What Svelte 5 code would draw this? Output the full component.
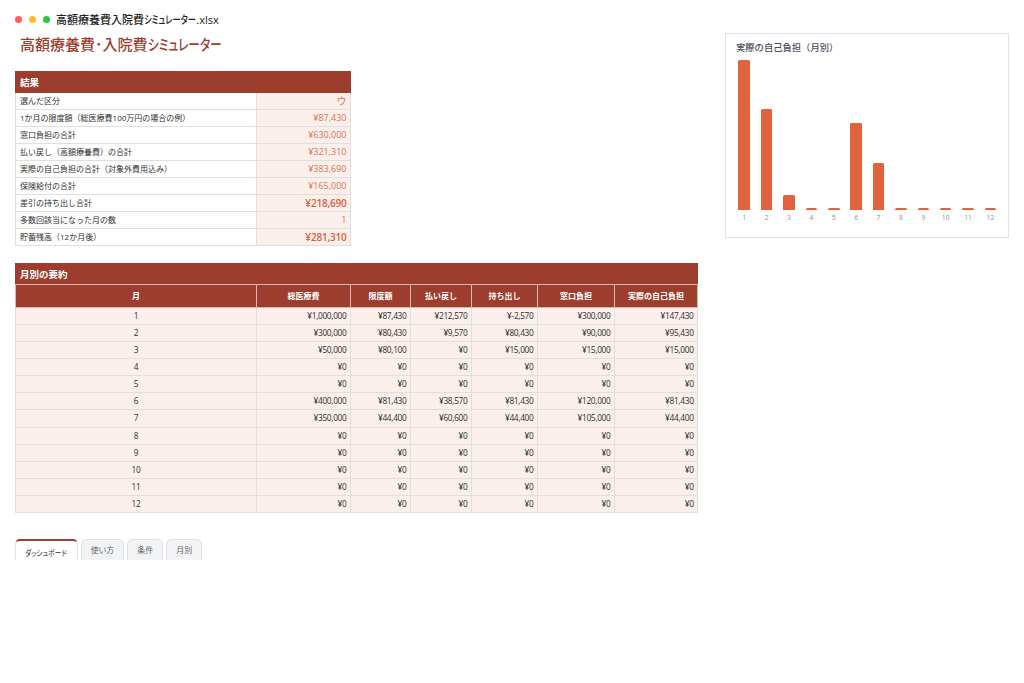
<script>
  const results = [
    ['選んだ区分', 'ウ', 'big'],
    ['1か月の限度額（総医療費100万円の場合の例）', '¥87,430', ''],
    ['窓口負担の合計', '¥630,000', ''],
    ['払い戻し（高額療養費）の合計', '¥321,310', ''],
    ['実際の自己負担の合計（対象外費用込み）', '¥383,690', ''],
    ['保険給付の合計', '¥165,000', ''],
    ['差引の持ち出し合計', '¥218,690', 'strong'],
    ['多数回該当になった月の数', '1', ''],
    ['貯蓄残高（12か月後）', '¥281,310', 'strong']
  ];
  const heads = ['月', '総医療費', '限度額', '払い戻し', '持ち出し', '窓口負担', '実際の自己負担'];
  const months = [
    ['¥1,000,000', '¥87,430', '¥212,570', '¥-2,570', '¥300,000', '¥147,430'],
    ['¥300,000', '¥80,430', '¥9,570', '¥80,430', '¥90,000', '¥95,430'],
    ['¥50,000', '¥80,100', '¥0', '¥15,000', '¥15,000', '¥15,000'],
    ['¥0', '¥0', '¥0', '¥0', '¥0', '¥0'],
    ['¥0', '¥0', '¥0', '¥0', '¥0', '¥0'],
    ['¥400,000', '¥81,430', '¥38,570', '¥81,430', '¥120,000', '¥81,430'],
    ['¥350,000', '¥44,400', '¥60,600', '¥44,400', '¥105,000', '¥44,400'],
    ['¥0', '¥0', '¥0', '¥0', '¥0', '¥0'],
    ['¥0', '¥0', '¥0', '¥0', '¥0', '¥0'],
    ['¥0', '¥0', '¥0', '¥0', '¥0', '¥0'],
    ['¥0', '¥0', '¥0', '¥0', '¥0', '¥0'],
    ['¥0', '¥0', '¥0', '¥0', '¥0', '¥0']
  ];
  const widths = [241, 94, 60, 61, 66, 77, 83];
  const bars = [150, 101, 15.5, 2, 2, 87, 47.5, 2, 2, 2, 2, 2];
  const tabs = ['ダッシュボード', '使い方', '条件', '月別'];
</script>

<div class="page">
  <header class="titlebar">
    <span class="dot red"></span>
    <span class="dot amber"></span>
    <span class="dot green"></span>
    <span class="file">高額療養費入院費<span class="kana k-file">シミュレーター</span>.xlsx</span>
  </header>

  <div class="sheet">
    <div class="main">
      <h1>高額療養費･入院費<span class="kana k-title">シミュレーター</span></h1>

      <table class="results">
        <colgroup><col class="c-label" /><col class="c-value" /></colgroup>
        <thead>
          <tr><th colspan="2" class="band">結果</th></tr>
        </thead>
        <tbody>
          {#each results as [label, value, kind]}
            <tr>
              <td>{label}</td>
              <td class="value {kind}">{value}</td>
            </tr>
          {/each}
        </tbody>
      </table>

      <table class="monthly">
        <colgroup>
          {#each widths as w}
            <col style="width:{w}px" />
          {/each}
        </colgroup>
        <thead>
          <tr><th colspan="7" class="band">月別の要約</th></tr>
          <tr class="heads">
            {#each heads as h}
              <th>{h}</th>
            {/each}
          </tr>
        </thead>
        <tbody>
          {#each months as row, i}
            <tr>
              <td class="month">{i + 1}</td>
              {#each row as cell}
                <td class="num">{cell}</td>
              {/each}
            </tr>
          {/each}
        </tbody>
      </table>

      <nav class="tabs">
        {#each tabs as t, i}
          <div class="tab" class:active={i === 0}>{#if i === 0}<span class="kana k-tab">{t}</span>{:else}{t}{/if}</div>
        {/each}
      </nav>
    </div>

    <aside class="chart">
      <div class="chart-title">実際の自己負担（月別）</div>
      <div class="plot">
        {#each bars as h}
          <div class="slot"><div class="bar" style="height:{h}px"></div></div>
        {/each}
      </div>
      <div class="axis">
        {#each bars as _, i}
          <span>{i + 1}</span>
        {/each}
      </div>
    </aside>
  </div>
</div>

<style>
  :global(body) {
    margin: 0;
    background: #fff;
  }
  .page {
    width: 1024px;
    height: 683px;
    overflow: hidden;
    font-family: "Open Sans", "Noto Sans CJK JP", sans-serif;
    color: #2f2f2f;
    box-sizing: border-box;
  }
  .titlebar {
    display: flex;
    align-items: center;
    gap: 7px;
    height: 14px;
    padding: 12px 0 0 15px;
  }
  .dot {
    width: 7px;
    height: 7px;
    border-radius: 50%;
  }
  .red { background: #ff5f57; }
  .amber { background: #febc2e; }
  .green { background: #28c840; }
  .kana {
    display: inline-block;
    transform-origin: left center;
    font-feature-settings: "palt";
  }
  .k-file { transform: scaleX(.75); margin-right: -17px; }
  .k-title { transform: scaleX(.78); margin-right: -20.7px; }
  .k-tab { transform: scaleX(.84); margin-right: -7px; }
  .file {
    margin-left: -1px;
    font-size: 11px;
    font-weight: 500;
    font-feature-settings: "palt";
    color: #222;
    white-space: nowrap;
  }
  .sheet {
    display: flex;
    align-items: flex-start;
    padding: 7px 15px 0;
  }
  .main {
    width: 683px;
    flex: none;
  }
  h1 {
    margin: 0 0 16px;
    padding: 0 0 0 5px;
    font-size: 15px;
    line-height: 22px;
    height: 22px;
    font-weight: 500;
    font-feature-settings: "palt";
    color: #9c3d2d;
    white-space: nowrap;
  }
  table {
    border-collapse: collapse;
    table-layout: fixed;
    font-size: 8px;
  }
  th, td {
    padding: 0 4px;
    overflow: hidden;
    white-space: nowrap;
    border: 1px solid #e2dedc;
    box-sizing: border-box;
  }
  td {
    height: 17.1px;
    line-height: 14px;
  }
  .band {
    height: 20.5px;
    text-align: left;
    background: #9c3d2d;
    border-color: #9c3d2d;
    color: #fff;
    font-size: 9.5px;
    font-weight: 700;
  }
  .results {
    width: 335px;
    margin-bottom: 17px;
  }
  .c-label { width: 241px; }
  .c-value { width: 94px; }
  .value {
    text-align: right;
    background: #faefeb;
    color: #dd7553;
    font-size: 9px;
    padding-right: 3.5px;
  }
  .value.big {
    font-size: 10px;
  }
  .value.strong {
    color: #d9603c;
    font-weight: 600;
    font-size: 10px;
    letter-spacing: -0.2px;
  }
  .monthly {
    width: 682px;
    margin-bottom: 26px;
  }
  .monthly .band {
    border-bottom-color: #d9b8b0;
  }
  .heads th {
    height: 23px;
    background: #9c3d2d;
    border-color: #d9b8b0;
    color: #fff;
    font-size: 8px;
    font-weight: 700;
    text-align: center;
  }
  .monthly td {
    background: #faefeb;
    color: #2f2f2f;
    font-size: 8.3px;
    letter-spacing: -0.3px;
  }
  .month { text-align: center; }
  .monthly .num {
    text-align: right;
    padding-right: 3.5px;
  }
  .tabs {
    display: flex;
    gap: 3px;
    height: 21px;
    overflow: hidden;
  }
  .tab {
    box-sizing: border-box;
    height: 24px;
    padding: 3px 9px 0;
    border: 1px solid #dfe2e5;
    border-radius: 5px 5px 0 0;
    background: #f2f3f5;
    color: #666;
    font-size: 8px;
    line-height: 14px;
    font-feature-settings: "palt";
  }
  .tab.active {
    padding-top: 5px;
    background: #fff;
    border-top: 2px solid #9c3d2d;
    color: #333;
  }
  .chart {
    box-sizing: border-box;
    width: 284px;
    height: 205px;
    margin-left: 27px;
    flex: none;
    border: 1px solid #dfe2e4;
    padding: 0 7px;
  }
  .chart-title {
    height: 25px;
    padding: 7px 3px 0;
    box-sizing: border-box;
    font-size: 9.3px;
    line-height: 13px;
    font-weight: 500;
    color: #47505c;
    white-space: nowrap;
  }
  .plot {
    display: grid;
    grid-template-columns: repeat(12, 22.4px);
    height: 151px;
    align-items: end;
  }
  .slot {
    display: flex;
    justify-content: center;
  }
  .bar {
    width: 11.5px;
    background: #e0633d;
    border-radius: 1.5px 1.5px 0 0;
  }
  .axis {
    display: grid;
    grid-template-columns: repeat(12, 22.4px);
    margin-top: 3px;
    font-size: 6.8px;
    line-height: 10px;
    color: #8b9099;
    text-align: center;
  }
</style>
